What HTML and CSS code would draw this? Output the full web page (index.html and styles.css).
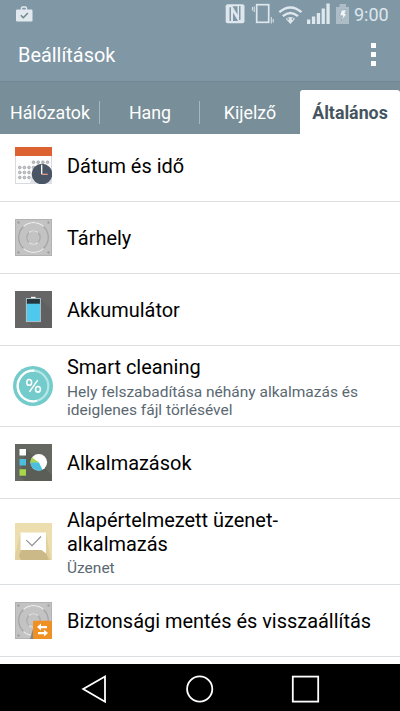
FILE: index.html
```
<!DOCTYPE html>
<html lang="hu">
<head>
<meta charset="utf-8">
<title>Beállítások</title>
<link rel="stylesheet" href="styles.css">
</head>
<body>
<div class="screen">
  <header class="header">
    <div class="status">
      <svg class="bag" width="17" height="16" viewBox="0 0 17 16"><path d="M5.5 4V2.2Q5.5 1 6.700 1h2.600q1.200 0 1.200 1.200V4" fill="none" stroke="#e1e9ee" stroke-width="1.400"/><rect x="0" y="3.500" width="16.500" height="12" rx="1.300" fill="#e1e9ee"/><path d="M4.800 9.200l2.500 2.500 4.600-4.800" fill="none" stroke="#71858f" stroke-width="1.500"/></svg>
      <svg class="indicators" width="126" height="24" viewBox="224 2 126 24" fill="#dde7ed">
        <rect x="225.700" y="4.200" width="18.800" height="19" rx="2"/>
        <path d="M229.500 7.200h1.500v13.800h-1.500zM239 6h1.500v14H239zM233 12.500l5 8.500h-5zM232.500 6.300h5v8.500z" fill="#8097a5"/>
        <rect x="256.700" y="4.700" width="12" height="17.600" fill="none" stroke="#dde7ed" stroke-width="1.700"/>
        <path d="M254.200 6.500v5.500M252.400 7v3.500M271.300 17v6.500M273.200 19v3.500" stroke="#dde7ed" stroke-width="1"/>
        <g fill="none" stroke="#dde7ed" stroke-width="2.400"><path d="M279.300 12.200q11.100-9.600 22.200 0"/><path d="M282.800 16.200q7.600-6.500 15.200 0"/></g>
        <path d="M285.700 18.700q4.700-3.600 9.400 0l-4.700 5.300z"/>
        <path d="M287 18.600h2.200l-1.100 1.700zM291.400 18.600h2.200l-1.100 1.700z" fill="#70858f"/>
        <path d="M307 19.500h3.300V24H307zM311.900 16.500h3.300V24h-3.300zM316.800 13h3.300v11h-3.300zM321.600 8.500h3.300V24h-3.300zM326.400 3.500h3.300V24h-3.300z"/>
        <path d="M336 7h3.500V4h6.500v3h3v17h-13z" fill="#adbdc7"/>
        <path d="M341.500 10h5l-1.700 3.700h2.400l-5.800 7 1.400-5h-3.100z" fill="#f0f5f7" stroke="#8297a3" stroke-width=".5"/>
      </svg>
      <span class="clock">9:00</span>
    </div>
    <div class="titlebar">
      <h1 class="title">Beállítások</h1>
      <div class="more"><i></i><i></i><i></i></div>
    </div>
  </header>
  <nav class="tabs">
    <span class="tab">Hálózatok</span>
    <span class="tab">Hang</span>
    <span class="tab last">Kijelző</span>
    <span class="tab active">Általános</span>
  </nav>
  <main class="list">
    <div class="row first">
      <svg class="icon" viewBox="0 0 37 37">
        <rect x=".5" y=".5" width="36" height="36" fill="#fdfdfd" stroke="#d9dadd"/><path d="M17 25L15 37h22V25z" fill="#dfe1e8"/>
        <path d="M0 0h37v9H0z" fill="#dc6331"/>
        <g fill="#c3c4c8" stroke="#a3a5aa" stroke-width=".9"><g id="dots"><circle cx="4.800" cy="20.500" r="1.300"/><circle cx="9.400" cy="20.500" r="1.300"/><circle cx="14" cy="20.500" r="1.300"/></g><use href="#dots" y="5"/><use href="#dots" y="10"/><circle cx="18.500" cy="15.200" r="1.300"/><circle cx="23.200" cy="15.200" r="1.300"/><circle cx="27.900" cy="15.200" r="1.300"/><circle cx="32.600" cy="15.200" r="1.300"/><circle cx="18.500" cy="20.500" r="1.300"/></g>
        <circle cx="27" cy="27" r="10.300" fill="#4a5565"/><path d="M26.700 17.800v9.500" stroke="#fff" stroke-width="1.300"/><path d="M26.700 27.300h6" stroke="#e9a58b" stroke-width="1.200"/>
      </svg>
      <div class="label"><div class="name">Dátum és idő</div></div>
    </div>
    <div class="row">
      <svg class="icon" viewBox="0 0 37 37">
        <g id="disk"><rect x=".5" y=".5" width="36" height="36" fill="#c3c3c3" stroke="#b2b2b2"/>
        <g fill="none"><circle cx="18.500" cy="18.500" r="14.800" stroke="#a3a3a3" stroke-width="1.200"/><path d="M8.500 7.600A14.700 14.700 0 0 1 28.500 7.600M8.500 29.400A14.700 14.700 0 0 0 28.500 29.400" stroke="#ececec" stroke-width="1.300"/><circle cx="18.500" cy="18.500" r="6.700" stroke="#a9a9a9" stroke-width="1.100"/><path d="M14 13.500a6.700 6.700 0 0 1 9 0M14 23.500a6.700 6.700 0 0 0 9 0" stroke="#e5e5e5" stroke-width="1.200"/></g>
        <g fill="#a0a0a0"><circle cx="3.500" cy="3.500" r="1.200"/><circle cx="33.500" cy="3.500" r="1.200"/><circle cx="3.500" cy="33.500" r="1.200"/><circle cx="33.500" cy="33.500" r="1.200"/></g></g>
      </svg>
      <div class="label"><div class="name">Tárhely</div></div>
    </div>
    <div class="row">
      <svg class="icon" viewBox="0 0 37 37"><path d="M0 0h37v37H0z" fill="#666"/><path d="M26 8l11 11v18H18l-6-6z" fill="#606060"/><rect x="16" y="5.800" width="4.500" height="2" fill="#fff"/><rect x="11.400" y="7.600" width="14" height="23" fill="#4fc8ed" stroke="#b2c1c8"/><path d="M11.900 8h13v4.700h-13z" fill="#27363d"/></svg>
      <div class="label"><div class="name">Akkumulátor</div></div>
    </div>
    <div class="row smart">
      <svg class="icon round" viewBox="0 0 41 41"><circle cx="20.500" cy="20.500" r="20.500" fill="#74cbcc"/><circle cx="20.500" cy="20.500" r="15.700" fill="none" stroke="#b5e7e7" stroke-width="2.300"/><path d="M20.500 4.800A15.700 15.700 0 1 0 26 35.200" transform="rotate(5 20.500 20.500)" fill="none" stroke="#fff" stroke-width="2.300"/><g fill="none" stroke="#fff" stroke-width="1.600"><ellipse cx="16.600" cy="16.800" rx="2.500" ry="2.900"/><ellipse cx="25.600" cy="23.900" rx="2.500" ry="2.900"/><path d="M25.300 14.500l-8.400 12"/></g></svg>
      <div class="label two"><div class="name">Smart cleaning</div><div class="sub">Hely felszabadítása néhány alkalmazás és<br>ideiglenes fájl törlésével</div></div>
    </div>
    <div class="row">
      <svg class="icon" viewBox="0 0 37 37"><path d="M0 0h37v37H0z" fill="#656860"/><path d="M11 5l26 26v6H10L5 32z" fill="#5b5e57"/><path d="M4.500 5H11v6.500H4.500z" fill="#fff"/><path d="M4.500 15H11v6.500H4.500z" fill="#4bbfdd"/><path d="M4.500 25.200H11v6.500H4.500z" fill="#a9d54d"/><circle cx="23.800" cy="18.300" r="8.300" fill="#fff"/><path d="M23.800 18.300L27.500 25.800A8.300 8.300 0 0 1 15.500 18z" fill="#4bbfdd"/><path d="M23.800 18.300L15.500 18.500A8.300 8.300 0 0 1 17 13.500z" fill="#a9d54d"/></svg>
      <div class="label"><div class="name">Alkalmazások</div></div>
    </div>
    <div class="row message">
      <svg class="icon" viewBox="0 0 37 37"><path d="M0 0h37v37H0z" fill="#ecdeaf"/><path d="M0 37V33L5.500 10 31 10l5 27z" fill="#e1d19c"/><path d="M6 27h25v3l3 7H6L4 33z" fill="#cbb987"/><path d="M5.500 9.500H31v21L26.500 27H5.500z" fill="#fff"/><path d="M11.300 17.200l5.700 5.500L26 13.500" fill="none" stroke="#8e8e8e" stroke-width="1.100"/></svg>
      <div class="label two"><div class="name">Alapértelmezett üzenet-<br>alkalmazás</div><div class="sub">Üzenet</div></div>
    </div>
    <div class="row">
      <svg class="icon" viewBox="0 0 37 37"><use href="#disk"/><path d="M18 27l-3 10h6z" fill="#858585"/><rect x="18" y="18.700" width="19" height="18.300" rx="1.200" fill="#ee9024"/><path d="M22 25l4-3.500V24h6v2.300h-6v2.300zM33 31l-4-3.200v2.100h-6v2.300h6v2.300z" fill="#fff"/></svg>
      <div class="label"><div class="name">Biztonsági mentés és visszaállítás</div></div>
    </div>
  </main>
  <footer class="navbar">
    <svg width="400" height="47" viewBox="0 0 400 47" fill="none" stroke="#fff" stroke-width="1.800"><path d="M105 12.500v25.200L83.200 25z"/><circle cx="199.700" cy="25" r="12.600"/><rect x="292.800" y="12.600" width="25.400" height="25"/></svg>
  </footer>
</div>
</body>
</html>
```
FILE: styles.css
```
* { box-sizing: border-box; }
body { margin: 0; font-family: Roboto, "Liberation Sans", sans-serif; background: #fff; }
.screen { width: 400px; height: 711px; display: flex; flex-direction: column; overflow: hidden; }
svg { display: block; flex: none; }
.header { height: 81px; flex: none; background: #8097a5; }
.status { height: 29px; display: flex; align-items: center; padding: 0 11px 0 16px; }
.bag { margin-top: -2px; }
.indicators { margin: -2px 0 0 auto; }
.clock { width: 35px; margin-left: 4px; font-size: 18px; line-height: 29px; color: #dde7ed; white-space: nowrap; }
.titlebar { height: 52px; display: flex; align-items: center; justify-content: space-between; padding: 0 24px 0 18px; }
.title { margin: 0; padding-top: 2px; font-size: 19.9px; font-weight: 400; line-height: 50px; color: #fff; }
.more { display: flex; flex-direction: column; gap: 4px; margin-top: -1px; }
.more i { width: 5px; height: 5px; background: #fff; }
.tabs { height: 53px; flex: none; display: grid; grid-template-columns: repeat(4, 100px); background: #788e98; border-top: 1px solid #728892; padding-top: 8px; }
.tab { display: flex; align-items: center; justify-content: center; height: 44px; font-size: 17.8px; color: #fff; background: linear-gradient(#a8b7be, #a8b7be) 99px 11px / 1px 23px no-repeat; }
.tab.last { background: none; }
.tab.active { background: #fff; border-radius: 3px 3px 0 0; color: #455560; font-weight: 700; }
.list { height: 530px; flex: none; overflow: hidden; }
.row { height: 72px; display: flex; align-items: center; padding-left: 15px; border-bottom: 1px solid #dcdfe1; }
.first { margin-top: -4px; }
.smart { height: 81px; padding-left: 13px; }
.message { height: 86px; }
.icon { width: 37px; height: 37px; margin-right: 15px; }
.icon.round { width: 40px; height: 40px; margin-right: 14px; }
.label { white-space: nowrap; }
.label.two { padding-top: 1px; }
.name { font-size: 19.95px; line-height: 24px; color: #000; }
.sub { margin-top: 4px; font-size: 15.5px; line-height: 18px; color: #5a6872; }
.message .sub { margin-top: 3px; }
.navbar { height: 47px; flex: none; background: #000; }
```
